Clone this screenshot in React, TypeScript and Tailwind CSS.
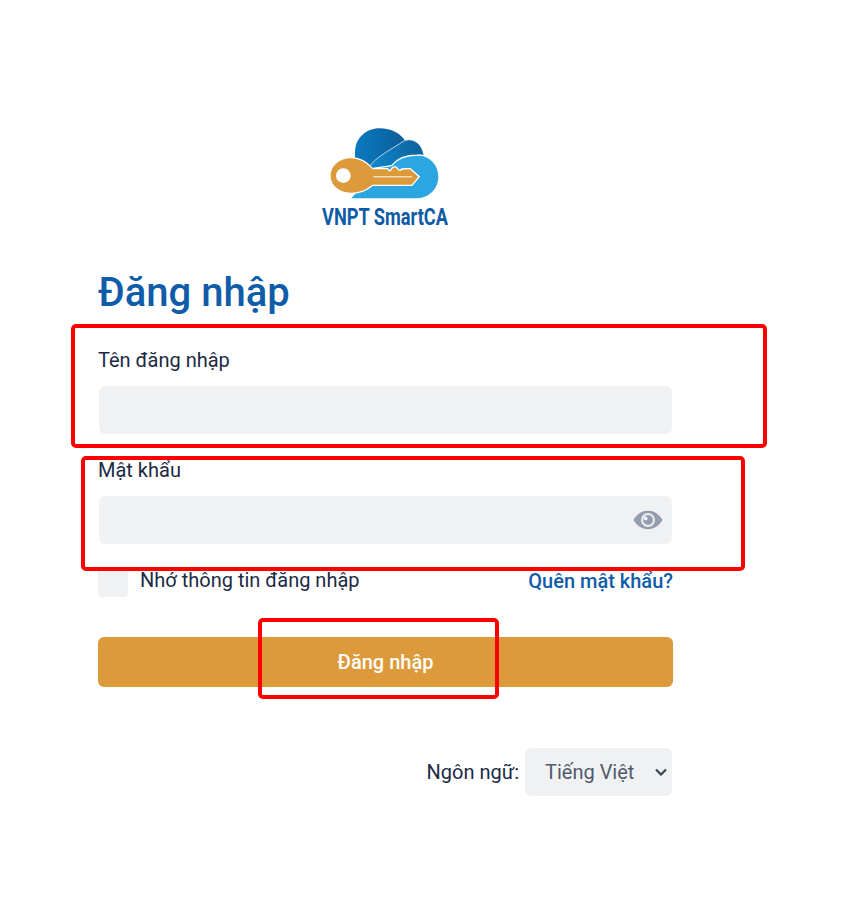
export default function App() {
  const font = { fontFamily: "Roboto, sans-serif" };
  return (
    <div style={font} className="relative w-[844px] h-[908px] bg-white overflow-hidden text-[#1c2a44]">
      <div className="ml-[98px] w-[575px] pt-[115px]">
        <svg viewBox="0 0 450 375" className="block ml-[212px] w-[150px] h-[125px] overflow-visible">
          <defs>
            <linearGradient id="d" x1="0" x2="1" y1="0" y2="0">
              <stop offset="0" stopColor="#0a7ac0" />
              <stop offset="1" stopColor="#0c5a92" />
            </linearGradient>
            <linearGradient id="m" x1="0" x2="1" y1="0" y2="0">
              <stop offset="0" stopColor="#1088cc" />
              <stop offset="1" stopColor="#0c5f9a" />
            </linearGradient>
          </defs>
          <path d="M135 112C135 68 170 40 208 40C245 40 272 55 288 82L300 160L135 160Z" fill="url(#d)" />
          <path d="M178 155C195 128 240 105 285 76C315 68 336 90 341 118L341 170L178 170Z" fill="url(#m)" stroke="#fff" strokeWidth="2" />
          <path d="M118 252L318 252C358 252 387 222 387 185C387 148 358 118 322 120C290 120 262 130 245 152L190 160L130 240Z" fill="#2ba6e0" stroke="#fff" strokeWidth="4" />
          <path d="M62 183C62 152 90 130 122 130C150 130 172 145 187 163L232 163Q239 176 246 163Q254 151 262 163Q269 173 276 164L300 163L325 185L305 209L187 209C172 222 150 233 122 233C90 233 62 213 62 183Z" fill="#dd9a3b" stroke="#fff" strokeWidth="8" paintOrder="stroke" />
          <circle cx="100" cy="182" r="22" fill="#fff" />
          <rect x="190" y="184" width="116" height="3" fill="#fff" />
          <text x="36" y="331" textLength="378" lengthAdjust="spacingAndGlyphs" fontSize="72" fontWeight="700" fill="#0f5ba5" style={font}>VNPT SmartCA</text>
        </svg>
        <h1 className="mt-[29px] text-[40px] leading-[47px] font-medium text-[#0f5ca8]">Đăng nhập</h1>
        <label className="block mt-[31px] text-xl leading-[26px]">Tên đăng nhập</label>
        <div className="mt-[13px] ml-px mr-px h-12 rounded-md bg-[#eff1f3]" />
        <label className="block mt-6 text-xl leading-[24px]">Mật khẩu</label>
        <div className="mt-[14px] ml-px mr-px h-12 rounded-md bg-[#eff1f3] flex items-center justify-end pr-[9px]">
          <svg viewBox="0 0 30 20" className="w-[30px] h-5" fill="#959cae">
            <path fillRule="evenodd" d="M0.5 10C4 4 9 0.8 15 0.8S26 4 29.5 10C26 16 21 19.2 15 19.2S4 16 0.5 10ZM15 3A7 7 0 1 0 15 17A7 7 0 1 0 15 3Z" />
            <path fillRule="evenodd" d="M15 5A5 5 0 1 1 15 15A5 5 0 1 1 15 5ZM12.6 6.4A2 2 0 1 0 12.6 10.4A2 2 0 1 0 12.6 6.4Z" />
          </svg>
        </div>
        <div className="mt-[23px] flex items-start justify-between">
          <div className="flex items-start gap-3">
            <div className="w-[30px] h-[30px] rounded bg-[#eff1f3]" />
            <span className="text-xl leading-[26px]">Nhớ thông tin đăng nhập</span>
          </div>
          <a className="text-xl leading-[28px] font-medium text-[#0f5ca8]">Quên mật khẩu?</a>
        </div>
        <button className="mt-10 w-full h-[50px] rounded-md bg-[#dd9a3a] text-white text-xl font-medium">Đăng nhập</button>
        <div className="mt-[61px] flex items-center justify-end gap-[6px] pr-px">
          <span className="text-xl">Ngôn ngữ:</span>
          <div className="relative w-[147px] h-12">
            <select style={font} className="appearance-none w-full h-full rounded-md bg-[#eff1f3] pl-5 text-xl text-[#4f5a6b]" defaultValue="vi">
              <option value="vi">Tiếng Việt</option>
              <option value="en">English</option>
            </select>
            <svg viewBox="0 0 12 8" className="absolute right-[5px] top-[20px] w-3 h-2" fill="none" stroke="#3a4454" strokeWidth="2.2">
              <path d="M1 1.5L6 6.5L11 1.5" />
            </svg>
          </div>
        </div>
      </div>
      <div className="absolute left-[71px] top-[324px] w-[696px] h-[124px] border-4 border-[#ff0000] rounded-[5px]" />
      <div className="absolute left-[81px] top-[456px] w-[664px] h-[115px] border-4 border-[#ff0000] rounded-[5px]" />
      <div className="absolute left-[258px] top-[618px] w-[241px] h-[81px] border-4 border-[#ff0000] rounded-[5px]" />
    </div>
  );
}
